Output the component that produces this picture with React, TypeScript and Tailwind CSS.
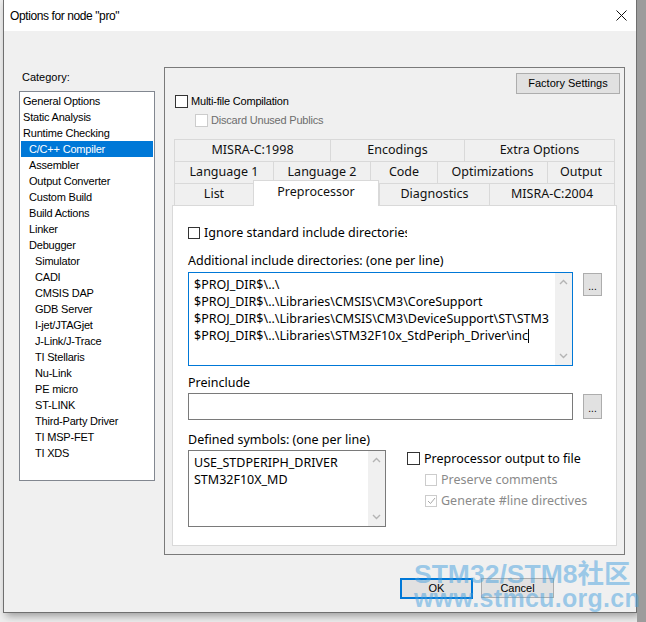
import React from "react";

const sys = "font-['Liberation_Sans',sans-serif]";
const yh = "font-['Noto_Sans','Noto_Sans_CJK_SC',sans-serif]";

type Category = { label: string; level: 0 | 1 | 2; selected?: boolean };

const categories: Category[] = [
  { label: "General Options", level: 0 },
  { label: "Static Analysis", level: 0 },
  { label: "Runtime Checking", level: 0 },
  { label: "C/C++ Compiler", level: 1, selected: true },
  { label: "Assembler", level: 1 },
  { label: "Output Converter", level: 1 },
  { label: "Custom Build", level: 1 },
  { label: "Build Actions", level: 1 },
  { label: "Linker", level: 1 },
  { label: "Debugger", level: 1 },
  { label: "Simulator", level: 2 },
  { label: "CADI", level: 2 },
  { label: "CMSIS DAP", level: 2 },
  { label: "GDB Server", level: 2 },
  { label: "I-jet/JTAGjet", level: 2 },
  { label: "J-Link/J-Trace", level: 2 },
  { label: "TI Stellaris", level: 2 },
  { label: "Nu-Link", level: 2 },
  { label: "PE micro", level: 2 },
  { label: "ST-LINK", level: 2 },
  { label: "Third-Party Driver", level: 2 },
  { label: "TI MSP-FET", level: 2 },
  { label: "TI XDS", level: 2 },
];

const indent = ["pl-[2px]", "pl-[8px]", "pl-[14px]"];

type Tab = { label: string; width: string; active?: boolean };

const tabRows: Tab[][] = [
  [
    { label: "MISRA-C:1998", width: "w-[156px]" },
    { label: "Encodings", width: "w-[134px]" },
    { label: "Extra Options", width: "w-[151px]" },
  ],
  [
    { label: "Language 1", width: "w-[99px]" },
    { label: "Language 2", width: "w-[97px]" },
    { label: "Code", width: "w-[67px]" },
    { label: "Optimizations", width: "w-[110px]" },
    { label: "Output", width: "w-[68px]" },
  ],
  [
    { label: "List", width: "w-[79px]" },
    { label: "Preprocessor", width: "w-[126px]", active: true },
    { label: "Diagnostics", width: "w-[110px]" },
    { label: "MISRA-C:2004", width: "w-[126px]" },
  ],
];

const includeDirs = [
  "$PROJ_DIR$\\..\\",
  "$PROJ_DIR$\\..\\Libraries\\CMSIS\\CM3\\CoreSupport",
  "$PROJ_DIR$\\..\\Libraries\\CMSIS\\CM3\\DeviceSupport\\ST\\STM3",
  "$PROJ_DIR$\\..\\Libraries\\STM32F10x_StdPeriph_Driver\\inc",
];

function Checkbox({
  disabled,
  checked,
  size = "w-[13px] h-[13px]",
}: {
  disabled?: boolean;
  checked?: boolean;
  size?: string;
}) {
  return (
    <div
      className={`${size} shrink-0 border bg-white flex items-center justify-center ${
        disabled ? "border-[#cccccc]" : "border-[#333333]"
      }`}
    >
      {checked && (
        <svg width="9" height="8" viewBox="0 0 9 8">
          <path d="M1 4 L3.5 6.5 L8 1" fill="none" stroke="#a8a8a8" strokeWidth="1" />
        </svg>
      )}
    </div>
  );
}

function Chevron({ up }: { up?: boolean }) {
  return (
    <svg width="9" height="6" viewBox="0 0 9 6">
      <path
        d={up ? "M1 5 L4.5 1.5 L8 5" : "M1 1 L4.5 4.5 L8 1"}
        fill="none"
        stroke="#b4b4b4"
        strokeWidth="1.4"
      />
    </svg>
  );
}

function ScrollBar() {
  return (
    <div className="w-[17px] shrink-0 bg-[#f0f0f0] flex flex-col items-center justify-between py-[6px]">
      <Chevron up />
      <Chevron />
    </div>
  );
}

function BrowseButton({ className }: { className: string }) {
  return (
    <div
      className={`${className} w-[19px] shrink-0 bg-[#e1e1e1] border border-[#adadad] flex items-center justify-center ${sys} text-[10px] text-black pt-[3px]`}
    >
      ...
    </div>
  );
}

function TabStrip() {
  return (
    <div className={`ml-[2px] w-[442px] ${yh} text-[12.5px] text-[#111]`}>
      {tabRows.map((row, i) => (
        <div key={i} className="flex">
          {row.map((tab, j) =>
            tab.active ? (
              <div
                key={tab.label}
                className={`${tab.width} relative z-10 -mt-[3px] -mb-px h-[26px] bg-white border-l border-r border-t border-[#d9d9d9] flex items-start justify-center pt-[2px]`}
              >
                {tab.label}
              </div>
            ) : (
              <div
                key={tab.label}
                className={`${tab.width} h-[22px] bg-[#f0f0f0] border-l border-t border-[#d9d9d9] flex items-center justify-center ${
                  j === row.length - 1 ? "border-r" : ""
                }`}
              >
                {tab.label}
              </div>
            )
          )}
        </div>
      ))}
    </div>
  );
}

function PreprocessorPage() {
  return (
    <div className={`w-[445px] h-[341px] bg-white border border-[#d9d9d9] pl-[15px] ${yh} text-[12.5px] text-black`}>
      {/* Ignore standard include directories */}
      <div className="mt-[21px] flex items-center h-[12px]">
        <Checkbox size="w-[12px] h-[12px]" />
        <div className="ml-[4px] w-[203px] overflow-hidden whitespace-nowrap leading-[16px]">
          Ignore standard include directories
        </div>
      </div>

      <div className="mt-[14px] leading-[16px]">Additional include directories: (one per line)</div>
      <div className="mt-[3px] flex items-start">
        <div className="w-[385px] h-[94px] border border-[#0078d7] flex">
          <div className="flex-1 pl-[5px] pt-[3px] leading-[17px] whitespace-nowrap overflow-hidden">
            {includeDirs.map((line, i) => (
              <div key={i} className="flex items-center">
                {line}
                {i === includeDirs.length - 1 && (
                  <span className="inline-block w-px h-[14px] bg-black" />
                )}
              </div>
            ))}
          </div>
          <ScrollBar />
        </div>
        <BrowseButton className="ml-[10px] mt-[1px] h-[23px]" />
      </div>

      <div className="mt-[9px] leading-[16px]">Preinclude</div>
      <div className="mt-[2px] flex items-start">
        <div className="w-[385px] h-[27px] border border-[#7a7a7a] bg-white" />
        <BrowseButton className="ml-[10px] mt-[1px] h-[25px]" />
      </div>

      <div className="mt-[12px] leading-[16px]">Defined symbols: (one per line)</div>
      <div className="mt-[2px] flex items-start">
        <div className="w-[198px] h-[77px] border border-[#7a7a7a] flex">
          <div className="flex-1 pl-[5px] pt-[3px] leading-[17px] whitespace-nowrap">
            <div>USE_STDPERIPH_DRIVER</div>
            <div>STM32F10X_MD</div>
          </div>
          <ScrollBar />
        </div>
        <div className="ml-[21px] mt-[2px] flex flex-col">
          <div className="flex items-center h-[13px]">
            <Checkbox />
            <span className="ml-[4px] leading-[16px]">Preprocessor output to file</span>
          </div>
          <div className="mt-[9px] ml-[18px] flex items-center h-[12px] text-[#8a8a8a]">
            <Checkbox disabled size="w-[12px] h-[12px]" />
            <span className="ml-[4px] leading-[16px]">Preserve comments</span>
          </div>
          <div className="mt-[9px] ml-[18px] flex items-center h-[12px] text-[#8a8a8a]">
            <Checkbox disabled checked size="w-[12px] h-[12px]" />
            <span className="ml-[4px] leading-[16px]">Generate #line directives</span>
          </div>
        </div>
      </div>
    </div>
  );
}

function CompilerPanel() {
  return (
    <div className="mt-[36px] ml-[9px] w-[461px] h-[488px] border border-[#7a7a7a] flex flex-col">
      <div className="flex justify-end pt-[5px] pr-[4px]">
        <div className={`w-[104px] h-[21px] bg-[#e1e1e1] border border-[#adadad] flex items-center justify-center ${sys} text-[11px] text-black`}>
          Factory Settings
        </div>
      </div>

      <div className={`mt-[1px] pl-[10px] flex items-center h-[13px] ${sys} text-[11px] text-black`}>
        <Checkbox />
        <span className="ml-[3px] tracking-[-0.2px]">Multi-file Compilation</span>
      </div>
      <div className={`mt-[6px] pl-[30px] flex items-center h-[13px] ${sys} text-[11px] text-[#6d6d6d]`}>
        <Checkbox disabled />
        <span className="ml-[3px] tracking-[-0.2px]">Discard Unused Publics</span>
      </div>

      <div className="mt-[12px] pl-[7px] flex flex-col">
        <TabStrip />
        <PreprocessorPage />
      </div>
    </div>
  );
}

function CategoryList() {
  return (
    <div className="w-[136px] pt-[39px]">
      <div className={`pl-[3px] h-[14px] leading-[14px] ${sys} text-[11px] text-black`}>Category:</div>
      <div className={`mt-[7px] h-[390px] border border-[#828790] bg-white p-px ${sys} text-[11px] tracking-[-0.2px]`}>
        {categories.map((c) => (
          <div
            key={c.label}
            className={`h-[16px] leading-[16px] ${indent[c.level]} ${
              c.selected ? "bg-[#0078d7] text-white" : "text-black"
            }`}
          >
            {c.label}
          </div>
        ))}
      </div>
    </div>
  );
}

export default function App() {
  return (
    <div className="relative w-[646px] h-[622px] overflow-hidden bg-[#eeeeee] flex">
      <div className="w-[3px] shrink-0" />

      {/* dialog window */}
      <div className="w-[634px] h-[613px] shrink-0 border-x border-b border-[#6f6f6f] bg-[#f0f0f0] flex flex-col shadow-[3px_3px_8px_rgba(0,0,0,0.35)]">
        <div className="h-[31px] shrink-0 bg-white flex items-center justify-between pl-[6px] pr-[9px]">
          <span className={`${sys} text-[12px] tracking-[-0.4px] text-black`}>Options for node "pro"</span>
          <svg width="11" height="11" viewBox="0 0 11 11">
            <path d="M0.5 0.5 L10.5 10.5 M10.5 0.5 L0.5 10.5" stroke="#111" strokeWidth="1" />
          </svg>
        </div>

        <div className="flex pl-[15px]">
          <CategoryList />
          <CompilerPanel />
        </div>

        <div className={`mt-[23px] flex justify-end gap-[8px] pr-[82px] ${sys} text-[11px] text-black`}>
          <div className="w-[73px] h-[21px] bg-[#e1e1e1] border-2 border-[#0078d7] flex items-center justify-center">
            OK
          </div>
          <div className="w-[73px] h-[20px] bg-[#e1e1e1] border border-[#adadad] flex items-center justify-center">
            Cancel
          </div>
        </div>
      </div>

      <div className="flex-1 bg-[#9c9c9c]" />

      {/* site watermark */}
      <div className="absolute left-[414px] top-[561px] pointer-events-none font-['Liberation_Sans','Noto_Sans_CJK_SC',sans-serif] font-bold text-[rgba(70,160,222,0.5)] leading-none">
        <div className="text-[26.5px]">STM32/STM8社区</div>
        <div className="text-[25px] mt-[-2px] tracking-[0.3px]">www.stmcu.org.cn</div>
      </div>
    </div>
  );
}
